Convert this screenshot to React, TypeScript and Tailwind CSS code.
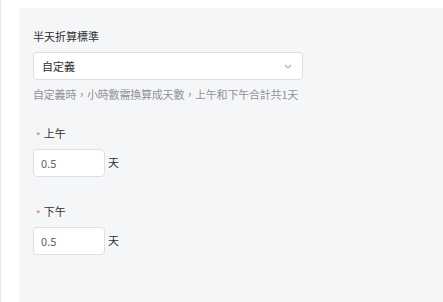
import React from "react";

const font = { fontFamily: '"Noto Sans CJK TC", "Noto Sans", sans-serif' };

function NumRow({ label }: { label: string }) {
  return (
    <div className="flex flex-col">
      <div className="flex items-center h-[16px] text-[11px] text-[#303133]">
        <span className="text-[#f56c6c] ml-[3px] mr-[3px] text-[10px] leading-none mt-[5px]">*</span>
        <span>{label}</span>
      </div>
      <div className="flex items-center mt-[8px]">
        <div className="w-[72px] h-[28px] bg-white border border-[#dcdfe6] rounded-[4px] flex items-center pl-[7px] text-[11px] text-[#606266]">
          0.5
        </div>
        <span className="ml-[3px] text-[11px] text-[#303133] -mt-[2px]">天</span>
      </div>
    </div>
  );
}

export default function App() {
  return (
    <div className="w-[443px] h-[302px] bg-white flex overflow-hidden" style={font}>
      <div className="w-[1px] h-full bg-[#e8e8e8]" />
      <div className="flex-1 pl-[18px] pt-[8px]">
        <div className="h-full bg-[#f5f6f8] rounded-tl-[4px] pl-[14px] pt-[20px]">
          <div className="h-[16px] flex items-center text-[11px] text-[#303133]">半天折算標準</div>
          <div className="mt-[8px] w-[270px] h-[28px] bg-white border border-[#dcdfe6] rounded-[4px] flex items-center justify-between pl-[8px] pr-[10px]">
            <span className="text-[11px] text-[#303133]">自定義</span>
            <svg width="8" height="5" viewBox="0 0 8 5">
              <polyline points="1,1 4,4 7,1" fill="none" stroke="#a8abb2" strokeWidth="1.2" />
            </svg>
          </div>
          <div className="mt-[6px] h-[16px] flex items-center text-[11px] text-[#909399] tracking-[-0.2px]">
            自定義時，小時數需換算成天數，上午和下午合計共1天
          </div>
          <div className="mt-[23px]">
            <NumRow label="上午" />
          </div>
          <div className="mt-[26px]">
            <NumRow label="下午" />
          </div>
        </div>
      </div>
    </div>
  );
}
